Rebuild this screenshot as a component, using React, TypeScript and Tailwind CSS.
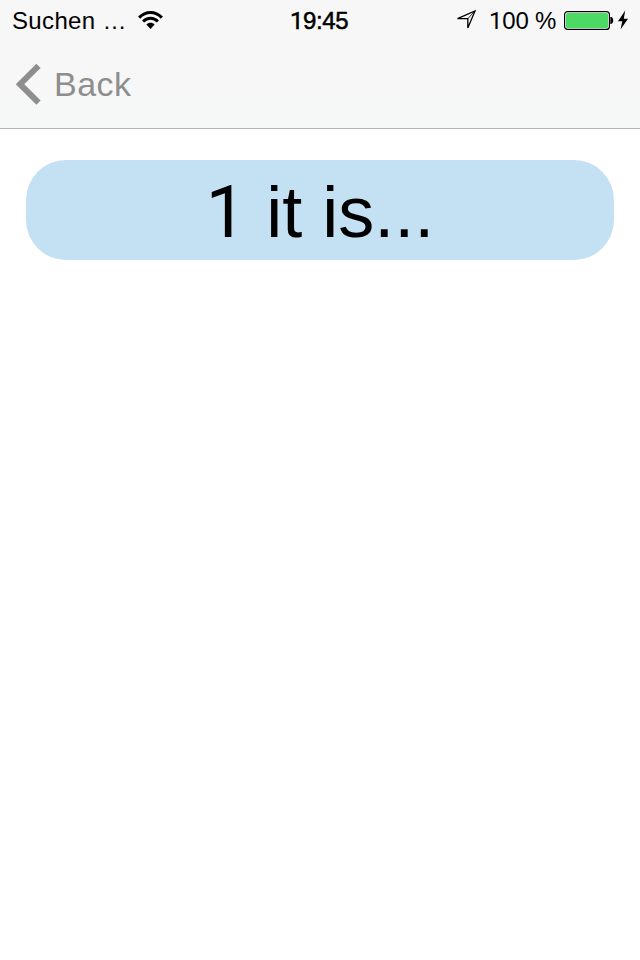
import React from 'react';

// Digit one without a foot serif
function One() {
  return <span className="font-['Roboto',sans-serif]">1</span>;
}

function StatusBar() {
  return (
    <div className="grid h-10 grid-cols-[1fr_auto_1fr] items-center pl-3 pr-[10px] text-[24px] leading-[38px] text-black">
      <div className="flex items-center">
        <span className="w-[126px] whitespace-pre pt-0.5 tracking-[0.35px]">Suchen …</span>
        <svg width="25" height="20" viewBox="0 0 26 20" fill="none" stroke="#000">
          <path d="M1.2 7.5C8 .4 18 .4 24.8 7.5" strokeWidth="3.2" />
          <path d="M5.3 11.6C9.8 7 16.2 7 20.7 11.6" strokeWidth="3" />
          <path d="M8.7 14.8C11 12.2 15 12.2 17.3 14.8L13 19.3Z" fill="#000" stroke="none" />
        </svg>
      </div>
      <span className="-ml-1 pt-0.5 tracking-[-0.4px] [-webkit-text-stroke:0.5px_black]"><One />9:45</span>
      <div className="flex items-center justify-end">
        <svg width="22" height="22" viewBox="0 0 22 22" fill="none" stroke="#000" strokeWidth="1.3">
          <path d="M2.5 9.7L20 1.9L12.8 19V9.7Z" />
          <path d="M12.8 9.7L20 1.9" strokeWidth="0.8" />
        </svg>
        <span className="ml-3 w-[75px] whitespace-nowrap pt-0.5 tracking-[-0.2px]"><One />00 %</span>
        <svg width="66" height="22" viewBox="0 0 66 22">
          <rect x=".6" y="2.6" width="44.8" height="17.8" rx="3" fill="#fff" stroke="#000" strokeWidth="1.2" />
          <rect x="2" y="4" width="42" height="15" rx="1.5" fill="#4cd964" />
          <path d="M46.3 8H47C50 8.3 50 14.7 47 15H46.3Z" fill="#000" />
          <path d="M61.2 1.5L54 12.3H58.3L56.5 20.5L64 9.7H59.8Z" fill="#000" />
        </svg>
      </div>
    </div>
  );
}

export default function App() {
  return (
    <div className="min-h-[960px] w-[640px] bg-white font-['Liberation_Sans',Arial,sans-serif]">
      <header className="h-[129px] border-b border-[#b2b2b2] bg-linear-to-b from-[#f7f7f7] from-60% to-[#f6f8f7]">
        <StatusBar />
        <button className="flex h-[88px] items-center pl-4 text-[34px] leading-none text-[#8e8e8e]">
          <svg width="26" height="42" viewBox="0 0 26 42" fill="none">
            <path d="M22.5 2.8L4 21.2L22.5 39.6" stroke="#8e8e8e" strokeWidth="6" />
          </svg>
          <span className="ml-3 tracking-[0.5px]">Back</span>
        </button>
      </header>
      <main className="px-[26px] pt-[31px]">
        <h1 className="h-[100px] rounded-[40px] bg-[#c4e1f3] text-center text-[72px] font-normal leading-[104px] text-black">
          <One /> it is...
        </h1>
      </main>
    </div>
  );
}
